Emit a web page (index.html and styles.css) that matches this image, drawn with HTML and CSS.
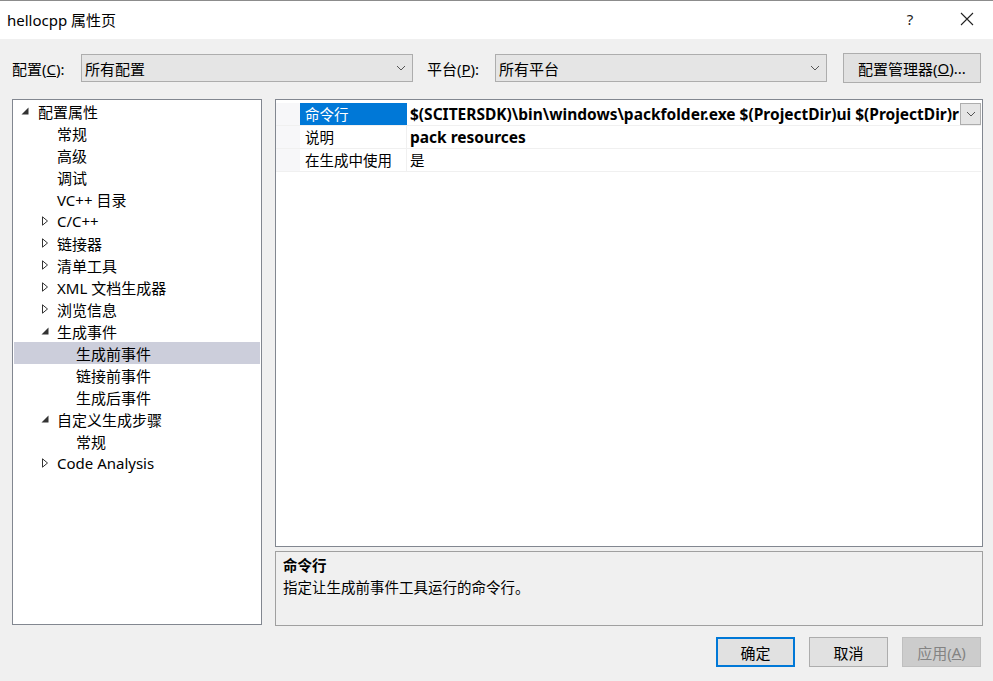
FILE: index.html
```html
<!DOCTYPE html>
<html>
<head>
<meta charset="utf-8">
<link rel="stylesheet" href="styles.css">
</head>
<body>
<div class="window">
  <div class="titlebar">
    <span class="title">hellocpp 属性页</span>
    <span class="tb-help">?</span>
    <span class="tb-close"><svg width="14" height="14" viewBox="0 0 14 14"><path d="M1 1L13 13M13 1L1 13" stroke="#222" stroke-width="1.1" fill="none"/></svg></span>
  </div>
  <div class="body">
    <div class="config-row">
      <span class="lbl lbl-config">配置(<u>C</u>):</span>
      <div class="combo combo-config"><span>所有配置</span><svg class="chev" width="10" height="6" viewBox="0 0 10 6"><path d="M1 1L5 5L9 1" stroke="#555" fill="none"/></svg></div>
      <span class="lbl lbl-platform">平台(<u>P</u>):</span>
      <div class="combo combo-platform"><span>所有平台</span><svg class="chev" width="10" height="6" viewBox="0 0 10 6"><path d="M1 1L5 5L9 1" stroke="#555" fill="none"/></svg></div>
      <div class="btn btn-mgr">配置管理器(<u>O</u>)...</div>
    </div>
    <div class="main">
      <div class="tree">
        <div class="node l0"><span class="exp"><svg width="8" height="8" viewBox="0 0 8 8"><path d="M7.5 0.5V7.5H0.5Z" fill="#333"/></svg></span>配置属性</div>
        <div class="node l1"><span class="exp"></span>常规</div>
        <div class="node l1"><span class="exp"></span>高级</div>
        <div class="node l1"><span class="exp"></span>调试</div>
        <div class="node l1"><span class="exp"></span>VC++ 目录</div>
        <div class="node l1"><span class="exp"><svg width="8" height="10" viewBox="0 0 8 10"><path d="M1.5 0.8V9.2L6.5 5Z" stroke="#333" fill="none"/></svg></span>C/C++</div>
        <div class="node l1"><span class="exp"><svg width="8" height="10" viewBox="0 0 8 10"><path d="M1.5 0.8V9.2L6.5 5Z" stroke="#333" fill="none"/></svg></span>链接器</div>
        <div class="node l1"><span class="exp"><svg width="8" height="10" viewBox="0 0 8 10"><path d="M1.5 0.8V9.2L6.5 5Z" stroke="#333" fill="none"/></svg></span>清单工具</div>
        <div class="node l1"><span class="exp"><svg width="8" height="10" viewBox="0 0 8 10"><path d="M1.5 0.8V9.2L6.5 5Z" stroke="#333" fill="none"/></svg></span>XML 文档生成器</div>
        <div class="node l1"><span class="exp"><svg width="8" height="10" viewBox="0 0 8 10"><path d="M1.5 0.8V9.2L6.5 5Z" stroke="#333" fill="none"/></svg></span>浏览信息</div>
        <div class="node l1"><span class="exp"><svg width="8" height="8" viewBox="0 0 8 8"><path d="M7.5 0.5V7.5H0.5Z" fill="#333"/></svg></span>生成事件</div>
        <div class="node l2 selected"><span class="exp"></span>生成前事件</div>
        <div class="node l2"><span class="exp"></span>链接前事件</div>
        <div class="node l2"><span class="exp"></span>生成后事件</div>
        <div class="node l1"><span class="exp"><svg width="8" height="8" viewBox="0 0 8 8"><path d="M7.5 0.5V7.5H0.5Z" fill="#333"/></svg></span>自定义生成步骤</div>
        <div class="node l2"><span class="exp"></span>常规</div>
        <div class="node l1"><span class="exp"><svg width="8" height="10" viewBox="0 0 8 10"><path d="M1.5 0.8V9.2L6.5 5Z" stroke="#333" fill="none"/></svg></span>Code Analysis</div>
      </div>
      <div class="right">
        <div class="grid">
          <div class="row">
            <div class="gutter"></div>
            <div class="name sel">命令行</div>
            <div class="value bold">$(SCITERSDK)\bin\windows\packfolder.exe $(ProjectDir)ui $(ProjectDir)r</div>
            <div class="dd"><svg width="10" height="6" viewBox="0 0 10 6"><path d="M1 1L5 5L9 1" stroke="#555" fill="none"/></svg></div>
          </div>
          <div class="row">
            <div class="gutter"></div>
            <div class="name">说明</div>
            <div class="value bold">pack resources</div>
          </div>
          <div class="row">
            <div class="gutter"></div>
            <div class="name">在生成中使用</div>
            <div class="value">是</div>
          </div>
        </div>
        <div class="desc">
          <div class="desc-title">命令行</div>
          <div class="desc-text">指定让生成前事件工具运行的命令行。</div>
        </div>
      </div>
    </div>
    <div class="buttons">
      <div class="btn btn-ok">确定</div>
      <div class="btn btn-cancel">取消</div>
      <div class="btn btn-apply">应用(<u>A</u>)</div>
    </div>
  </div>
</div>
</body>
</html>
```

FILE: styles.css
```css
* { box-sizing: border-box; }
html, body { margin: 0; padding: 0; }
body {
  width: 993px;
  height: 681px;
  overflow: hidden;
  background: #f0f0f0;
  font-family: "Noto Sans", "Noto Sans CJK SC", sans-serif;
  font-size: 15px;
  color: #000;
}
.window { width: 993px; height: 681px; display: flex; flex-direction: column; }
.titlebar {
  height: 39px;
  background: #fff;
  border-top: 1px solid #8c8c8c;
  display: flex;
  align-items: center;
  padding-left: 7px;
  flex: none;
}
.title { font-size: 15px; flex: 1; padding-bottom: 2px; }
.tb-help { width: 20px; text-align: center; font-size: 15px; color: #222; margin-right: 40px; padding-bottom: 2px; }
.tb-close { width: 14px; height: 14px; margin-right: 19px; display: flex; margin-bottom: 2px; }
.body { flex: 1; display: flex; flex-direction: column; padding: 14px 10px 0 12px; }
.config-row { display: flex; align-items: center; height: 30px; flex: none; }
.lbl { white-space: nowrap; }
.lbl-config { width: 69px; }
.lbl-platform { width: 68px; margin-left: 14px; }
.combo {
  height: 28px;
  background: #e5e5e5;
  border: 1px solid #adadad;
  display: flex;
  align-items: center;
  padding-left: 3px;
  justify-content: space-between;
}
.combo .chev { margin-right: 6px; }
.combo-config { width: 332px; }
.combo-platform { width: 332px; }
.btn {
  height: 30px;
  background: #e1e1e1;
  border: 1px solid #adadad;
  display: flex;
  align-items: center;
  justify-content: center;
  white-space: nowrap;
}
.btn-mgr { width: 138px; margin-left: 16px; }
.main { display: flex; margin-top: 16px; height: 527px; flex: none; }
.tree {
  width: 250px;
  height: 526px;
  background: #fff;
  border: 1px solid #828790;
  padding: 0 1px;
  flex: none;
}
.node { height: 22px; display: flex; align-items: center; white-space: nowrap; }
.node .exp { width: 18px; display: flex; align-items: center; justify-content: flex-start; flex: none; }
.node.l0 { padding-left: 7px; }
.node.l0 .exp { width: 17px; }
.node.l1 { padding-left: 26px; }
.node.l1 .exp { width: 17px; padding-left: 1px; }
.node.l2 { padding-left: 45px; }
.node.l2 .exp { width: 17px; }
.node.selected { background: #cccedb; }
.right { width: 708px; min-width: 0; flex: none; margin-left: 13px; display: flex; flex-direction: column; }
.grid {
  height: 449px;
  background: #fff;
  border: 1px solid #828790;
  padding-top: 3px;
  padding-right: 1px;
}
.row { display: flex; height: 23px; border-bottom: 1px solid #f0f0f0; }
.gutter { width: 24px; background: #f7f7f9; flex: none; }
.name {
  width: 107px;
  padding-left: 5px;
  padding-bottom: 1px;
  border-right: 1px solid #f0f0f0;
  flex: none;
  display: flex;
  align-items: center;
  white-space: nowrap;
  font-size: 14.5px;
}
.name.sel { background: #0078d7; color: #fff; border-right-color: #0078d7; }
.value {
  flex: 1;
  min-width: 0;
  padding-left: 3px;
  padding-bottom: 1px;
  display: flex;
  align-items: center;
  white-space: nowrap;
  overflow: hidden;
  font-size: 14.5px;
}
.value.bold { font-weight: bold; font-size: 15.5px; }
.desc {
  margin-top: 4px;
  height: 75px;
  border: 1px solid #a0a0a0;
  background: #f0f0f0;
  padding: 2px 7px;
  font-size: 14.5px;
}
.desc-title { font-weight: bold; height: 22px; line-height: 22px; }
.desc-text { height: 22px; line-height: 22px; }
.dd {
  width: 21px;
  height: 22px;
  background: #e5e5e5;
  border: 1px solid #adadad;
  display: flex;
  align-items: center;
  justify-content: center;
  flex: none;
}
.buttons { display: flex; justify-content: flex-end; margin-top: 11px; gap: 14px; padding-right: 2px; }
.buttons .btn { width: 79px; }
.btn-ok { border: 2px solid #0078d7; }
.btn-apply { background: #cccccc; border-color: #bfbfbf; color: #838383; }
```
